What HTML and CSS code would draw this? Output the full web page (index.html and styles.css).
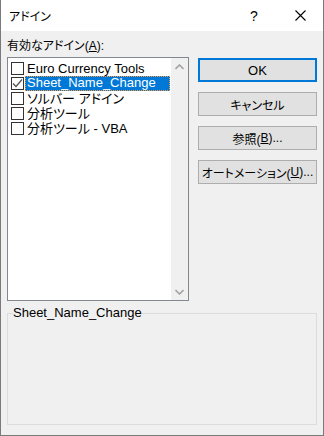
FILE: index.html
```html
<!DOCTYPE html>
<html lang="ja">

<head>
    <meta charset="UTF-8">
    <title>アドイン</title>
    <link rel="stylesheet" href="styles.css">
</head>

<body>
    <div class="window">
        <div class="titlebar">
            <span class="title">アドイン</span>
            <span class="cap-btn">?</span>
            <span class="cap-btn">
                <svg width="11" height="11" viewBox="0 0 11 11">
                    <path d="M0.5 0.5L10.5 10.5M10.5 0.5L0.5 10.5" stroke="#000" stroke-width="1.1" fill="none" />
                </svg>
            </span>
        </div>

        <div class="content">
            <div class="main">
                <div class="left">
                    <div class="caption">有効なアドイン(<u>A</u>):</div>
                    <div class="listbox">
                        <ul class="items">
                            <li><span class="box"></span><span class="name">Euro Currency Tools</span></li>
                            <li><span class="box checked">
                                    <svg width="11" height="11" viewBox="0 0 11 11">
                                        <path d="M1 5.5L4 8.5L10 1.5" stroke="#555" stroke-width="1.3" fill="none" />
                                    </svg>
                                </span><span class="name selected">Sheet_Name_Change</span></li>
                            <li><span class="box"></span><span class="name">ソルバー アドイン</span></li>
                            <li><span class="box"></span><span class="name">分析ツール</span></li>
                            <li><span class="box"></span><span class="name">分析ツール - VBA</span></li>
                        </ul>
                        <div class="scrollbar">
                            <span class="arrow">
                                <svg width="9" height="6" viewBox="0 0 9 6">
                                    <path d="M0.5 5L4.5 1L8.5 5" stroke="#a3a3a3" stroke-width="1.6" fill="none" />
                                </svg>
                            </span>
                            <span class="arrow">
                                <svg width="9" height="6" viewBox="0 0 9 6">
                                    <path d="M0.5 1L4.5 5L8.5 1" stroke="#a3a3a3" stroke-width="1.6" fill="none" />
                                </svg>
                            </span>
                        </div>
                    </div>
                </div>

                <div class="buttons">
                    <div class="btn default">OK</div>
                    <div class="btn">キャンセル</div>
                    <div class="btn">参照(<u>B</u>)...</div>
                    <div class="btn">オートメーション(<u>U</u>)...</div>
                </div>
            </div>

            <fieldset class="group">
                <legend>Sheet_Name_Change</legend>
            </fieldset>
        </div>
    </div>
</body>

</html>
```

FILE: styles.css
```css
body {
    margin: 0;
    padding: 0;
    font-family: "Liberation Sans", "Noto Sans CJK JP", sans-serif;
    font-size: 13px;
    font-feature-settings: "palt";
    color: #000;
    background: #fff;
}

.window {
    width: 324px;
    height: 436px;
    box-sizing: border-box;
    border: 1px solid #7a7a7a;
    border-top: none;
    background-color: #f0f0f0;
}

.titlebar {
    height: 31px;
    background-color: #fff;
    display: flex;
    align-items: center;
}

.title {
    flex: 1;
    padding-left: 8px;
    margin-top: -1px;
    font-size: 12px;
}

.cap-btn {
    width: 46px;
    height: 31px;
    display: flex;
    align-items: center;
    justify-content: center;
    font-size: 14px;
}

.content {
    padding: 0 6px;
}

.main {
    display: flex;
    gap: 9px;
}

.left {
    width: 182px;
}

.caption {
    line-height: 16px;
    margin-top: 7px;
    margin-bottom: 3px;
    font-size: 12px;
}

.listbox {
    height: 244px;
    box-sizing: border-box;
    border: 1px solid #828790;
    background-color: #fff;
    display: flex;
}

.items {
    list-style: none;
    margin: 0;
    padding: 3px 1px 0 3px;
    flex: 1;
}

.items li {
    display: flex;
    height: 15px;
    line-height: 15px;
}

.box {
    width: 13px;
    height: 13px;
    box-sizing: border-box;
    border: 1px solid #333;
    margin-top: 1px;
    margin-right: 1px;
    display: flex;
    align-items: center;
    justify-content: center;
    background-color: #fff;
}

.name {
    padding: 0 2px;
    white-space: nowrap;
}

.name.selected {
    flex: 1;
    padding: 0 1px 1px 1px;
    background-color: #0078d7;
    color: #fff;
    border: 1px dotted #ff9a3c;
    line-height: 12px;
}

.scrollbar {
    width: 17px;
    background-color: #f0f0f0;
    display: flex;
    flex-direction: column;
    justify-content: space-between;
}

.arrow {
    height: 17px;
    display: flex;
    align-items: center;
    justify-content: center;
}

.buttons {
    width: 119px;
    margin-top: 27px;
    display: flex;
    flex-direction: column;
    gap: 10px;
}

.btn {
    height: 24px;
    box-sizing: border-box;
    border: 1px solid #adadad;
    background-color: #e1e1e1;
    display: flex;
    align-items: center;
    justify-content: center;
    font-size: 12px;
}

.btn.default {
    border: 2px solid #0078d7;
    font-size: 13px;
}

.group {
    margin: 4px 0 0 0;
    padding: 0;
    height: 120px;
    box-sizing: border-box;
    border: 1px solid #dcdcdc;
}

.group legend {
    padding: 0;
    margin-left: 5px;
    line-height: 16px;
}
```
